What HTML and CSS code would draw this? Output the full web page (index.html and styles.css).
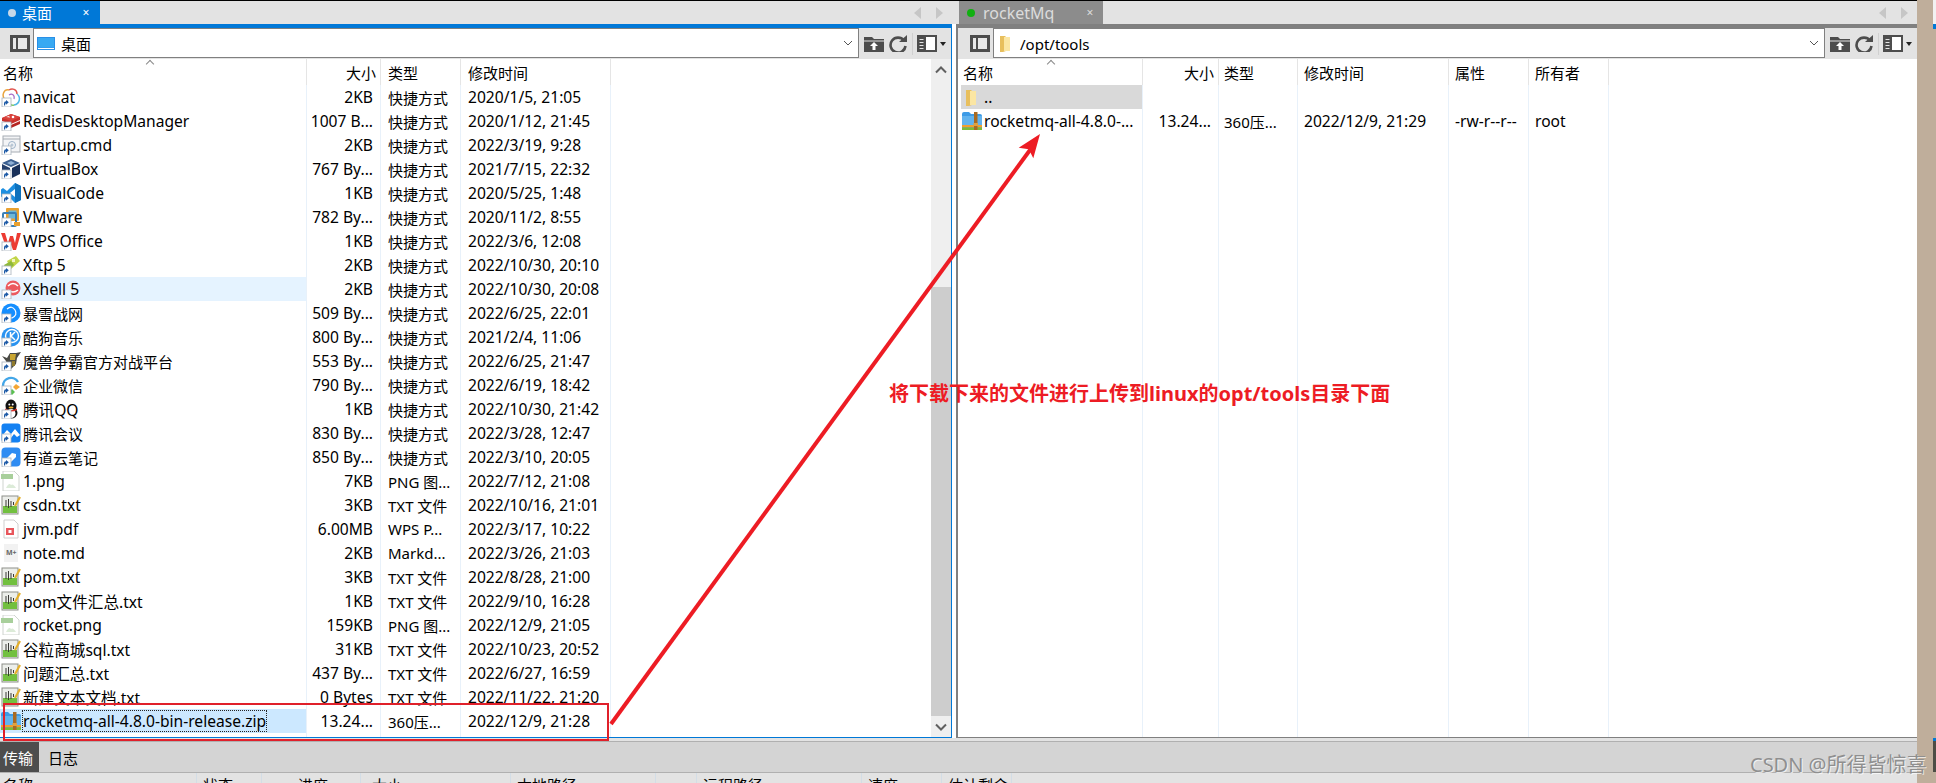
FILE: index.html
```html
<!DOCTYPE html>
<html lang="en">

<head>
    <meta charset="UTF-8">
    <meta name="viewport" content="width=device-width, initial-scale=1.0">
    <title>Xftp</title>
    <link rel="stylesheet" href="styles.css">
</head>

<body>
    <svg class="defs">
        <defs>
            <g id="i-link"><rect x="1" y="11" width="9" height="9" fill="#fff" stroke="#a9b2bc" stroke-width=".8"/><path d="M3 18.5v-2.2q0-2 2-2v-1.4l2.8 2.4-2.8 2.4v-1.4q-.9 0-.9 2.2z" fill="#1d5aa6"/></g>
            <g id="i-navicat"><path d="M4 13C0 8 3 2 8 3" fill="none" stroke="#e8a33c" stroke-width="1.5"/><path d="M8 3c3-2 8-1 8 4" fill="none" stroke="#e2544f" stroke-width="1.5"/><path d="M16 7c4 3 3 10-3 11" fill="none" stroke="#4fb7e6" stroke-width="1.5"/><path d="M13 18c-2 1-3 0-4-1" fill="none" stroke="#7fc96a" stroke-width="1.5"/><path d="M8 8c3-2 6 0 5 4" fill="none" stroke="#a86fc9" stroke-width="1.2"/></g>
            <g id="i-redis"><path d="M1 7l9-4 9 3v3l-9 4-9-3z" fill="#c9302c"/><path d="M1 11l9 3 9-4v3l-9 4-9-3z" fill="#b52522"/><path d="M1 7l9 3 9-4-9-3z" fill="#d9423c"/><circle cx="12" cy="6" r="1.3" fill="#fff"/><path d="M5 6l3-1 1 1.400z" fill="#fff"/></g>
            <g id="i-cmd"><rect x="2" y="1" width="17" height="16" fill="#f3f4f6" stroke="#a6acb3"/><path d="M2 4h17" stroke="#a6acb3"/><circle cx="11" cy="10" r="3.500" fill="none" stroke="#9db3c9"/><circle cx="11" cy="10" r="1.500" fill="#b9c8d7"/></g>
            <g id="i-vbox"><path d="M10 0l9 4-9 4-9-4z" fill="#3b5f8f"/><path d="M1 5l8 4v10l-8-4z" fill="#25406c"/><path d="M19 5l-8 4v10l8-4z" fill="#183059"/><path d="M10 2l4 2-4 2-4-2z" fill="#8fb0d6"/></g>
            <g id="i-vscode"><path d="M14 0l6 3v14l-6 3-8-8-4 3-2-1.500V6.500L2 5l4 3z" fill="#1d8fe1"/><path d="M14 6l-5 4 5 4z" fill="#fff"/><path d="M14 0l6 3v14l-6 3z" fill="#0f72bd"/></g>
            <g id="i-vmware"><rect x="5" y="1" width="13" height="13" rx="1" fill="#e9a12f"/><rect x="7.500" y="3.500" width="8" height="8" fill="#6bb7d8"/><rect x="2" y="6" width="13" height="13" rx="1" fill="none" stroke="#3a7fb5" stroke-width="2"/><path d="M13 15h6v4h-6z" fill="#e9a12f"/></g>
            <g id="i-wps"><path d="M0 2h4l3 10 2-7h3l2 7 2-10h4l-5 17h-3l-3-8-2 8H6z" fill="#ec3b32"/></g>
            <g id="i-xftp"><path d="M6 6l9-5 4 5-9 8z" fill="#c2d548"/><path d="M3 10l7-4 3 4-7 6z" fill="#8fb93a"/><rect x="11" y="4" width="3" height="3" fill="#f1f4c4"/></g>
            <g id="i-xshell"><circle cx="12" cy="9" r="7.500" fill="#ec5a5f"/><path d="M7 7q5-5 10 0M7 11q5 4 10 0" fill="none" stroke="#fff" stroke-width="1.600"/></g>
            <g id="i-battle"><circle cx="10" cy="10" r="9.500" fill="#148eff"/><path d="M6 6q5-4 8 1t-3 8q-4 0-6-4" fill="none" stroke="#fff" stroke-width="1.200"/></g>
            <g id="i-kugou"><rect x=".5" y=".5" width="19" height="19" rx="9" fill="#2a93f0"/><circle cx="11" cy="9" r="6.500" fill="none" stroke="#fff" stroke-width="1.400"/><path d="M9.500 5v8M14 5l-4 4 4 4" fill="none" stroke="#fff" stroke-width="1.500"/></g>
            <g id="i-war"><path d="M1 5l5 2 3-5h6l5-1-4 6-1 6-5 5-4-5-1-3z" fill="#4a4a45"/><path d="M9 3h6l-1 6H9z" fill="#c9a531"/><path d="M11 10h3v5h-3z" fill="#8f7a2c"/></g>
            <g id="i-wecom"><path d="M2 11a8 8 0 0 1 15-4" fill="none" stroke="#43a6e8" stroke-width="2.400"/><path d="M15 9l4 3-4 3-3-3z" fill="#f4a634"/><path d="M11 14l3 3-3 3-3-3z" fill="#5ac04f"/></g>
            <g id="i-qq"><ellipse cx="10" cy="7" rx="5.500" ry="6.500" fill="#111"/><ellipse cx="10" cy="14" rx="6.500" ry="5.500" fill="#111"/><ellipse cx="10" cy="14.500" rx="4.500" ry="4.500" fill="#fff"/><path d="M4 9.500q6 3 12 0v1.500q-6 3-12 0z" fill="#d9302a"/><ellipse cx="10" cy="8.500" rx="2.500" ry="1" fill="#f1b82d"/><circle cx="8.300" cy="5.500" r="1" fill="#fff"/><circle cx="11.700" cy="5.500" r="1" fill="#fff"/></g>
            <g id="i-meet"><rect x=".5" y=".5" width="19" height="19" rx="3" fill="#1481f2"/><path d="M1 13l5-6 4 4 4-5 5 6-3 2-3-3-3 4-3-3-4 3z" fill="#fff"/></g>
            <g id="i-note"><rect x=".5" y=".5" width="19" height="19" rx="4" fill="#2f8cf2"/><path d="M5 12l6-6 4 1v3l-5 5z" fill="#fff"/></g>
            <g id="i-png"><path d="M2 0h11l5 5v15H2z" fill="#fff" stroke="#cfd4cf"/><path d="M0 3h12v5H0z" fill="#a8cf9b"/><path d="M5 17q3-6 5-3 2-2 5 3z" fill="#dcebd8"/></g>
            <g id="i-txt"><rect x="1" y="1" width="16" height="18" fill="#eceeea" stroke="#8d9089"/><rect x="2" y="11" width="14" height="7" fill="#72c03f"/><path d="M5 5v7M7.500 4v9M10 6v6M12.500 7v3" stroke="#3a3a36" stroke-width="1"/><path d="M14 11l5-9" stroke="#e5b02b" stroke-width="2.200"/></g>
            <g id="i-pdf"><path d="M3 1h10l4 4v14H3z" fill="#fff" stroke="#cfcfcf"/><rect x="5" y="9" width="8" height="7" fill="#e8565c"/><rect x="7.500" y="11" width="3" height="3" fill="#fff"/></g>
            <g id="i-md"><path d="M3 1h14v18H3z" fill="#f2f2f2"/><text x="5" y="12" class="mdMark">M+</text></g>
            <g id="i-zip"><path d="M0 3q0-2 2-2h5l2 2h9q2 0 2 2v13H0z" fill="#3d9be6"/><path d="M0 5h20v9H0z" fill="#62b3ee"/><rect y="14" width="20" height="2.500" fill="#f0a030"/><rect y="16.500" width="20" height="2.500" fill="#7cbb3a"/><rect x="12" y="1" width="3.500" height="18" fill="#a86a22"/><rect x="11.500" y="12" width="4.500" height="3" fill="#e0a040"/></g>
            <g id="i-folder"><path d="M1 2h5l1 1v14l-3 1H1z" fill="#e8bf5d"/><path d="M5 3h6v14H5z" fill="#fbe6a3"/></g>
            <g id="i-panel"><rect x="1.500" y="1.500" width="17" height="14" fill="#e8e8e8" stroke="#4d4d4d" stroke-width="3"/><rect x="6" y="2" width="2" height="13" fill="#4d4d4d"/></g>
            <g id="i-up"><path d="M0 2h8l2 2h10v13H0z" fill="#4d4d4d"/><path d="M0 6h20" stroke="#e3e3e3"/><path d="M10 7l4 4h-2.500v4h-3v-4H6z" fill="#fff"/></g>
            <g id="i-refresh"><path d="M16 5.500A7.500 7.500 0 1 0 17.500 11" fill="none" stroke="#4d4d4d" stroke-width="2.600"/><path d="M11 7h8V0z" fill="#4d4d4d"/></g>
            <g id="i-layout"><rect width="20" height="17" fill="#4d4d4d"/><rect x="9" y="2" width="9" height="13" fill="#fff"/><path d="M2.500 4.500h4M2.500 7.500h4M2.500 10.500h4M2.500 13.500h4" stroke="#e3e3e3"/></g>
        </defs>
    </svg>

    <div class="app">
        <div class="topLine"></div>
        <div class="panes">
            <section class="pane paneLeft">
                <div class="tabStrip">
                    <div class="tab tabActive"><span class="tabDot"></span><span class="tabName">桌面</span><span class="tabClose">×</span></div>
                    <div class="tabNav"><span class="navPrev"></span><span class="navNext"></span></div>
                </div>
                <div class="paneBar"></div>
                <div class="paneBody">
                    <div class="toolbar">
                        <svg class="tool panelIcon" viewBox="0 0 20 17"><use href="#i-panel"/></svg>
                        <div class="addrBox">
                            <svg class="addrIcon" viewBox="0 0 18 13"><rect width="18" height="13" fill="#2a8fe6"/><rect x="1" y="1" width="16" height="9.500" fill="#38a9f2"/><rect x="1" y="11" width="16" height="1" fill="#fff"/></svg>
                            <span class="addrText">桌面</span>
                            <svg class="addrChevron" viewBox="0 0 10 6"><path d="M1 1l4 4 4-4" fill="none" stroke="#555"/></svg>
                        </div>
                        <svg class="tool" viewBox="0 0 20 17"><use href="#i-up"/></svg>
                        <svg class="tool" viewBox="0 0 20 17"><use href="#i-refresh"/></svg>
                        <span class="toolSep"></span>
                        <svg class="tool" viewBox="0 0 20 17"><use href="#i-layout"/></svg>
                        <span class="caret"></span>
                    </div>
                    <div class="listWrap">
                        <div class="list">
                            <div class="row head">
                                <div class="cell cName">名称<span class="sortMark"></span></div>
                                <div class="cell cSize">大小</div>
                                <div class="cell cType">类型</div>
                                <div class="cell cDate">修改时间</div>
                                <div class="cell cRest"></div>
                            </div>
                            <div class="row"><div class="cell cName"><svg class="ico" viewBox="0 0 20 20"><use href="#i-navicat"/><use href="#i-link"/></svg>navicat</div><div class="cell cSize">2KB</div><div class="cell cType">快捷方式</div><div class="cell cDate">2020/1/5, 21:05</div><div class="cell cRest"></div></div>
                            <div class="row"><div class="cell cName"><svg class="ico" viewBox="0 0 20 20"><use href="#i-redis"/><use href="#i-link"/></svg>RedisDesktopManager</div><div class="cell cSize">1007 B...</div><div class="cell cType">快捷方式</div><div class="cell cDate">2020/1/12, 21:45</div><div class="cell cRest"></div></div>
                            <div class="row"><div class="cell cName"><svg class="ico" viewBox="0 0 20 20"><use href="#i-cmd"/><use href="#i-link"/></svg>startup.cmd</div><div class="cell cSize">2KB</div><div class="cell cType">快捷方式</div><div class="cell cDate">2022/3/19, 9:28</div><div class="cell cRest"></div></div>
                            <div class="row"><div class="cell cName"><svg class="ico" viewBox="0 0 20 20"><use href="#i-vbox"/><use href="#i-link"/></svg>VirtualBox</div><div class="cell cSize">767 By...</div><div class="cell cType">快捷方式</div><div class="cell cDate">2021/7/15, 22:32</div><div class="cell cRest"></div></div>
                            <div class="row"><div class="cell cName"><svg class="ico" viewBox="0 0 20 20"><use href="#i-vscode"/><use href="#i-link"/></svg>VisualCode</div><div class="cell cSize">1KB</div><div class="cell cType">快捷方式</div><div class="cell cDate">2020/5/25, 1:48</div><div class="cell cRest"></div></div>
                            <div class="row"><div class="cell cName"><svg class="ico" viewBox="0 0 20 20"><use href="#i-vmware"/><use href="#i-link"/></svg>VMware</div><div class="cell cSize">782 By...</div><div class="cell cType">快捷方式</div><div class="cell cDate">2020/11/2, 8:55</div><div class="cell cRest"></div></div>
                            <div class="row"><div class="cell cName"><svg class="ico" viewBox="0 0 20 20"><use href="#i-wps"/><use href="#i-link"/></svg>WPS Office</div><div class="cell cSize">1KB</div><div class="cell cType">快捷方式</div><div class="cell cDate">2022/3/6, 12:08</div><div class="cell cRest"></div></div>
                            <div class="row"><div class="cell cName"><svg class="ico" viewBox="0 0 20 20"><use href="#i-xftp"/><use href="#i-link"/></svg>Xftp 5</div><div class="cell cSize">2KB</div><div class="cell cType">快捷方式</div><div class="cell cDate">2022/10/30, 20:10</div><div class="cell cRest"></div></div>
                            <div class="row"><div class="cell cName hover"><svg class="ico" viewBox="0 0 20 20"><use href="#i-xshell"/><use href="#i-link"/></svg>Xshell 5</div><div class="cell cSize">2KB</div><div class="cell cType">快捷方式</div><div class="cell cDate">2022/10/30, 20:08</div><div class="cell cRest"></div></div>
                            <div class="row"><div class="cell cName cjk"><svg class="ico" viewBox="0 0 20 20"><use href="#i-battle"/><use href="#i-link"/></svg>暴雪战网</div><div class="cell cSize">509 By...</div><div class="cell cType">快捷方式</div><div class="cell cDate">2022/6/25, 22:01</div><div class="cell cRest"></div></div>
                            <div class="row"><div class="cell cName cjk"><svg class="ico" viewBox="0 0 20 20"><use href="#i-kugou"/><use href="#i-link"/></svg>酷狗音乐</div><div class="cell cSize">800 By...</div><div class="cell cType">快捷方式</div><div class="cell cDate">2021/2/4, 11:06</div><div class="cell cRest"></div></div>
                            <div class="row"><div class="cell cName cjk"><svg class="ico" viewBox="0 0 20 20"><use href="#i-war"/><use href="#i-link"/></svg>魔兽争霸官方对战平台</div><div class="cell cSize">553 By...</div><div class="cell cType">快捷方式</div><div class="cell cDate">2022/6/25, 21:47</div><div class="cell cRest"></div></div>
                            <div class="row"><div class="cell cName cjk"><svg class="ico" viewBox="0 0 20 20"><use href="#i-wecom"/><use href="#i-link"/></svg>企业微信</div><div class="cell cSize">790 By...</div><div class="cell cType">快捷方式</div><div class="cell cDate">2022/6/19, 18:42</div><div class="cell cRest"></div></div>
                            <div class="row"><div class="cell cName"><svg class="ico" viewBox="0 0 20 20"><use href="#i-qq"/><use href="#i-link"/></svg>腾讯QQ</div><div class="cell cSize">1KB</div><div class="cell cType">快捷方式</div><div class="cell cDate">2022/10/30, 21:42</div><div class="cell cRest"></div></div>
                            <div class="row"><div class="cell cName cjk"><svg class="ico" viewBox="0 0 20 20"><use href="#i-meet"/><use href="#i-link"/></svg>腾讯会议</div><div class="cell cSize">830 By...</div><div class="cell cType">快捷方式</div><div class="cell cDate">2022/3/28, 12:47</div><div class="cell cRest"></div></div>
                            <div class="row"><div class="cell cName cjk"><svg class="ico" viewBox="0 0 20 20"><use href="#i-note"/><use href="#i-link"/></svg>有道云笔记</div><div class="cell cSize">850 By...</div><div class="cell cType">快捷方式</div><div class="cell cDate">2022/3/10, 20:05</div><div class="cell cRest"></div></div>
                            <div class="row"><div class="cell cName"><svg class="ico" viewBox="0 0 20 20"><use href="#i-png"/></svg>1.png</div><div class="cell cSize">7KB</div><div class="cell cType">PNG 图...</div><div class="cell cDate">2022/7/12, 21:08</div><div class="cell cRest"></div></div>
                            <div class="row"><div class="cell cName"><svg class="ico" viewBox="0 0 20 20"><use href="#i-txt"/></svg>csdn.txt</div><div class="cell cSize">3KB</div><div class="cell cType">TXT 文件</div><div class="cell cDate">2022/10/16, 21:01</div><div class="cell cRest"></div></div>
                            <div class="row"><div class="cell cName"><svg class="ico" viewBox="0 0 20 20"><use href="#i-pdf"/></svg>jvm.pdf</div><div class="cell cSize">6.00MB</div><div class="cell cType">WPS P...</div><div class="cell cDate">2022/3/17, 10:22</div><div class="cell cRest"></div></div>
                            <div class="row"><div class="cell cName"><svg class="ico" viewBox="0 0 20 20"><use href="#i-md"/></svg>note.md</div><div class="cell cSize">2KB</div><div class="cell cType">Markd...</div><div class="cell cDate">2022/3/26, 21:03</div><div class="cell cRest"></div></div>
                            <div class="row"><div class="cell cName"><svg class="ico" viewBox="0 0 20 20"><use href="#i-txt"/></svg>pom.txt</div><div class="cell cSize">3KB</div><div class="cell cType">TXT 文件</div><div class="cell cDate">2022/8/28, 21:00</div><div class="cell cRest"></div></div>
                            <div class="row"><div class="cell cName"><svg class="ico" viewBox="0 0 20 20"><use href="#i-txt"/></svg>pom文件汇总.txt</div><div class="cell cSize">1KB</div><div class="cell cType">TXT 文件</div><div class="cell cDate">2022/9/10, 16:28</div><div class="cell cRest"></div></div>
                            <div class="row"><div class="cell cName"><svg class="ico" viewBox="0 0 20 20"><use href="#i-png"/></svg>rocket.png</div><div class="cell cSize">159KB</div><div class="cell cType">PNG 图...</div><div class="cell cDate">2022/12/9, 21:05</div><div class="cell cRest"></div></div>
                            <div class="row"><div class="cell cName"><svg class="ico" viewBox="0 0 20 20"><use href="#i-txt"/></svg>谷粒商城sql.txt</div><div class="cell cSize">31KB</div><div class="cell cType">TXT 文件</div><div class="cell cDate">2022/10/23, 20:52</div><div class="cell cRest"></div></div>
                            <div class="row"><div class="cell cName"><svg class="ico" viewBox="0 0 20 20"><use href="#i-txt"/></svg>问题汇总.txt</div><div class="cell cSize">437 By...</div><div class="cell cType">TXT 文件</div><div class="cell cDate">2022/6/27, 16:59</div><div class="cell cRest"></div></div>
                            <div class="row"><div class="cell cName"><svg class="ico" viewBox="0 0 20 20"><use href="#i-txt"/></svg>新建文本文档.txt</div><div class="cell cSize">0 Bytes</div><div class="cell cType">TXT 文件</div><div class="cell cDate">2022/11/22, 21:20</div><div class="cell cRest"></div></div>
                            <div class="row"><div class="cell cName selected"><svg class="ico" viewBox="0 0 20 20"><use href="#i-zip"/></svg><span class="focusText">rocketmq-all-4.8.0-bin-release.zip</span></div><div class="cell cSize">13.24...</div><div class="cell cType">360压...</div><div class="cell cDate">2022/12/9, 21:28</div><div class="cell cRest"></div></div>
                            <div class="row rowFill">
                                <div class="cell cName"></div>
                                <div class="cell cSize"></div>
                                <div class="cell cType"></div>
                                <div class="cell cDate"></div>
                                <div class="cell cRest"></div>
                            </div>
                        </div>
                        <div class="scrollBar">
                            <div class="scrollBtn"><svg viewBox="0 0 12 8"><path d="M1 6.500l5-5 5 5" fill="none" stroke="#606060" stroke-width="2"/></svg></div>
                            <div class="scrollTrack"><div class="scrollThumb"></div></div>
                            <div class="scrollBtn"><svg viewBox="0 0 12 8"><path d="M1 1.500l5 5 5-5" fill="none" stroke="#606060" stroke-width="2"/></svg></div>
                        </div>
                    </div>
                </div>
            </section>

            <div class="paneGap"><div class="paneGapTop"></div></div>

            <section class="pane paneRight">
                <div class="tabStrip">
                    <div class="tab tabRemote"><span class="tabDot"></span><span class="tabName">rocketMq</span><span class="tabClose">×</span></div>
                    <div class="tabNav"><span class="navPrev"></span><span class="navNext"></span></div>
                </div>
                <div class="paneBar"></div>
                <div class="paneBody">
                    <div class="toolbar">
                        <svg class="tool panelIcon" viewBox="0 0 20 17"><use href="#i-panel"/></svg>
                        <div class="addrBox">
                            <svg class="addrFolder" viewBox="0 0 12 18"><use href="#i-folder"/></svg>
                            <span class="addrText">/opt/tools</span>
                            <svg class="addrChevron" viewBox="0 0 10 6"><path d="M1 1l4 4 4-4" fill="none" stroke="#555"/></svg>
                        </div>
                        <svg class="tool" viewBox="0 0 20 17"><use href="#i-up"/></svg>
                        <svg class="tool" viewBox="0 0 20 17"><use href="#i-refresh"/></svg>
                        <span class="toolSep"></span>
                        <svg class="tool" viewBox="0 0 20 17"><use href="#i-layout"/></svg>
                        <span class="caret"></span>
                    </div>
                    <div class="listWrap">
                        <div class="list">
                            <div class="row head">
                                <div class="cell cName">名称<span class="sortMark"></span></div>
                                <div class="cell cSize">大小</div>
                                <div class="cell cType">类型</div>
                                <div class="cell cDate">修改时间</div>
                                <div class="cell cAttr">属性</div>
                                <div class="cell cOwner">所有者</div>
                                <div class="cell cRest"></div>
                            </div>
                            <div class="row"><div class="cell cName parent"><svg class="ico" viewBox="0 0 20 20"><use href="#i-folder" x="3" y="1"/></svg>..</div><div class="cell cSize"></div><div class="cell cType"></div><div class="cell cDate"></div><div class="cell cAttr"></div><div class="cell cOwner"></div><div class="cell cRest"></div></div>
                            <div class="row"><div class="cell cName"><svg class="ico" viewBox="0 0 20 20"><use href="#i-zip"/></svg>rocketmq-all-4.8.0-...</div><div class="cell cSize">13.24...</div><div class="cell cType">360压...</div><div class="cell cDate">2022/12/9, 21:29</div><div class="cell cAttr">-rw-r--r--</div><div class="cell cOwner">root</div><div class="cell cRest"></div></div>
                            <div class="row rowFill">
                                <div class="cell cName"></div>
                                <div class="cell cSize"></div>
                                <div class="cell cType"></div>
                                <div class="cell cDate"></div>
                                <div class="cell cAttr"></div>
                                <div class="cell cOwner"></div>
                                <div class="cell cRest"></div>
                            </div>
                        </div>
                    </div>
                </div>
            </section>
        </div>

        <div class="bottomGap"></div>
        <div class="bottomTabs">
            <div class="bottomTab bottomTabActive">传输</div>
            <div class="bottomTab">日志</div>
        </div>
        <div class="transferHead">
            <div class="tCol tName">名称</div>
            <div class="tCol tState">状态</div>
            <div class="tCol tProg">进度</div>
            <div class="tCol tSize">大小</div>
            <div class="tCol tLocal">本地路径</div>
            <div class="tCol tDir"></div>
            <div class="tCol tRemote">远程路径</div>
            <div class="tCol tSpeed">速度</div>
            <div class="tCol tLeft">估计剩余</div>
        </div>
    </div>

    <div class="edge">
        <div class="edgeSliver">
            <span class="sliverTop"></span>
            <span class="sliverBlue"></span>
            <span class="sliverGap"></span>
            <span class="sliverBlue2"></span>
            <span class="sliverDark"></span>
        </div>
    </div>

    <!-- annotations drawn on top of the screenshot -->
    <div class="redBox"></div>
    <svg class="arrow" viewBox="0 0 1936 783">
        <path d="M611 724L1030 150" stroke="#ed1c24" stroke-width="4" fill="none"/>
        <path d="M1040 134L1033.300 158.300 1028.800 149.300 1018.700 147.700z" fill="#ed1c24"/>
    </svg>
    <div class="noteText">将下载下来的文件进行上传到linux的opt/tools目录下面</div>
    <div class="watermark">CSDN @所得皆惊喜</div>
</body>

</html>
```

FILE: styles.css
```css
* {
    margin: 0px;
    padding: 0px;
    box-sizing: border-box;
}

html,
body {
    width: 1936px;
    height: 783px;
    overflow: hidden;
}

body {
    display: flex;
    position: relative;
    background-color: white;
    color: black;
    font-family: "Noto Sans", "Noto Sans CJK SC", sans-serif;
    font-size: 15.6px;
}

.defs {
    display: none;
}

.mdMark {
    font-size: 7px;
    font-weight: bold;
    fill: #666;
}

.app {
    width: 1917px;
    height: 783px;
    display: flex;
    flex-direction: column;
    overflow: hidden;
}

.topLine {
    height: 1px;
    background-color: black;
    flex-shrink: 0;
}

.panes {
    height: 737px;
    display: flex;
    flex-shrink: 0;
}

.pane {
    display: flex;
    flex-direction: column;
}

.paneLeft {
    width: 952px;
}

.paneRight {
    flex: 1;
    min-width: 0;
}

.paneGap {
    width: 4px;
    background-color: white;
}

.paneGapTop {
    height: 23px;
    background-color: #e3e3e3;
}

/* tabs */
.tabStrip {
    height: 23px;
    background-color: #e3e3e3;
    display: flex;
    justify-content: space-between;
    flex-shrink: 0;
}

.tab {
    display: flex;
    align-items: center;
    font-size: 15px;
}

.tabActive {
    width: 100px;
    padding-left: 8px;
    background-color: #0078d7;
    color: white;
}

.tabRemote {
    width: 144px;
    margin-left: 3px;
    padding-left: 8px;
    background-color: #8c8c8c;
    color: #dcdcdc;
    font-size: 16px;
}

.tabDot {
    width: 8px;
    height: 8px;
    border-radius: 50%;
    background-color: #c5d8e8;
    flex-shrink: 0;
}

.tabRemote .tabDot {
    background-color: #10b010;
}

.tabName {
    margin-left: 6px;
    flex: 1;
}

.tabRemote .tabName {
    margin-left: 8px;
}

.tabClose {
    width: 14px;
    margin-right: 7px;
    text-align: center;
    font-size: 12px;
}

.tabRemote .tabClose {
    margin-right: 6px;
}

.tabNav {
    display: flex;
    align-items: center;
    gap: 15px;
    padding-right: 9px;
}

.navPrev,
.navNext {
    width: 0px;
    height: 0px;
    border-top: 6px solid transparent;
    border-bottom: 6px solid transparent;
}

.navPrev {
    border-right: 7px solid #c6c6c6;
}

.navNext {
    border-left: 7px solid #c6c6c6;
}

.paneBar {
    height: 4px;
    background-color: #808080;
    flex-shrink: 0;
}

.paneLeft .paneBar {
    background-color: #0078d7;
}

.paneBody {
    flex: 1;
    min-height: 0;
    display: flex;
    flex-direction: column;
    border-left: 2px solid #808080;
    border-bottom: 1px solid #808080;
}

.paneLeft .paneBody {
    border-left: 0px;
    border-right: 1px solid #0078d7;
    border-bottom: 1px solid #0078d7;
}

/* toolbar */
.toolbar {
    height: 31px;
    background-color: #e3e3e3;
    display: flex;
    align-items: center;
    gap: 4px;
    padding-right: 5px;
    padding-left: 10px;
    flex-shrink: 0;
}

.paneRight .toolbar {
    padding-left: 12px;
}

.tool {
    width: 20px;
    height: 17px;
    flex-shrink: 0;
}

.panelIcon {
    margin-right: -1px;
}

.toolSep {
    width: 1px;
    height: 22px;
    background-color: #d0d0d0;
}

.caret {
    width: 0px;
    height: 0px;
    margin-left: -1px;
    border-top: 4px solid #222;
    border-left: 3.5px solid transparent;
    border-right: 3.5px solid transparent;
}

.addrBox {
    flex: 1;
    height: 30px;
    margin-bottom: 1px;
    margin-right: 1px;
    border: 1px solid #808080;
    background-color: white;
    display: flex;
    align-items: center;
    padding-left: 3px;
    padding-right: 5px;
    font-size: 15px;
}

.addrIcon {
    width: 18px;
    height: 13px;
}

.addrFolder {
    width: 12px;
    height: 18px;
    margin-left: 2px;
}

.addrText {
    margin-left: 6px;
    flex: 1;
    padding-top: 1px;
}

.paneRight .addrText {
    margin-left: 9px;
}

.addrChevron {
    width: 10px;
    height: 6px;
}

/* file list */
.listWrap {
    flex: 1;
    min-height: 0;
    display: flex;
}

.list {
    flex: 1;
    min-width: 0;
    display: flex;
    flex-direction: column;
    background-color: white;
}

.paneRight .list {
    padding-left: 3px;
}

.row {
    height: 24px;
    display: flex;
    flex-shrink: 0;
}

.head {
    height: 26px;
    font-size: 15px;
}

.rowFill {
    flex: 1;
    height: auto;
}

.cell {
    height: 100%;
    border-right: 1px solid #e8f1fa;
    display: flex;
    align-items: center;
    white-space: nowrap;
    overflow: hidden;
    padding-left: 7px;
    flex-shrink: 0;
}

.head .cell {
    border-right-color: #e5e5e5;
    position: relative;
    padding-top: 1px;
}

.cName {
    width: 307px;
    padding-left: 1px;
    margin-right: 0px;
}

.cjk {
    font-size: 15px;
}

.cSize {
    width: 74px;
    justify-content: flex-end;
    padding-right: 7px;
    padding-left: 0px;
}

.head .cSize {
    padding-right: 4px;
}

.cType {
    width: 80px;
    font-size: 15px;
}

.cDate {
    width: 150px;
}

.cAttr,
.cOwner {
    width: 80px;
}

.cRest {
    flex: 1;
    border-right: 0px;
}

.paneRight .cName {
    width: 182px;
}

.paneRight .cSize {
    width: 76px;
}

.paneRight .cType {
    width: 79px;
    padding-left: 5px;
}

.paneRight .cDate {
    width: 151px;
    padding-left: 6px;
}

.paneRight .cAttr,
.paneRight .cOwner {
    padding-left: 6px;
}

.head .cName {
    padding-left: 3px;
}

.paneRight .head .cName {
    padding-left: 2px;
}

.sortMark {
    position: absolute;
    left: 147px;
    top: 2px;
    width: 6px;
    height: 6px;
    border-left: 1px solid #8a8a8a;
    border-top: 1px solid #8a8a8a;
    transform: rotate(45deg);
}

.paneRight .sortMark {
    left: 87px;
}

.ico {
    width: 20px;
    height: 20px;
    margin-right: 2px;
    flex-shrink: 0;
}

.hover {
    background-color: #e5f3ff;
}

.selected {
    background-color: #cce8ff;
}

.parent {
    background-color: #d9d9d9;
}

.focusText {
    outline: 1px dotted #222;
    line-height: 20px;
}

/* scroll bar */
.scrollBar {
    width: 20px;
    background-color: #efefef;
    display: flex;
    flex-direction: column;
    flex-shrink: 0;
}

.scrollBtn {
    height: 21px;
    display: flex;
    align-items: center;
    justify-content: center;
}

.scrollBtn svg {
    width: 12px;
    height: 8px;
}

.scrollTrack {
    flex: 1;
    display: flex;
    flex-direction: column;
    justify-content: flex-end;
}

.scrollThumb {
    height: 429px;
    background-color: #cdcdcd;
}

/* bottom panel */
.bottomGap {
    height: 4px;
    background-color: #e3e3e3;
    border-bottom: 1px solid #b0b0b0;
    flex-shrink: 0;
}

.bottomTabs {
    height: 31px;
    background-color: #d4d4d4;
    border-bottom: 1px solid #b0b0b0;
    display: flex;
    flex-shrink: 0;
}

.bottomTab {
    display: flex;
    align-items: center;
    padding-left: 9px;
    font-size: 15px;
}

.bottomTabActive {
    width: 39px;
    padding-left: 3px;
    background-color: #4d4d4d;
    color: white;
}

.transferHead {
    height: 24px;
    flex-shrink: 0;
    background-color: #e3e3e3;
    display: flex;
    font-size: 15px;
}

.tCol {
    height: 24px;
    line-height: 24px;
    white-space: nowrap;
    overflow: hidden;
    border-right: 1px solid #d3dde6;
    padding-left: 6px;
    flex-shrink: 0;
}

.tName {
    width: 197px;
    padding-left: 3px;
}

.tState {
    width: 65px;
}

.tProg {
    width: 99px;
    padding-left: 36px;
}

.tSize {
    width: 150px;
    padding-left: 11px;
}

.tLocal {
    width: 145px;
}

.tDir {
    width: 41px;
}

.tRemote {
    width: 165px;
}

.tSpeed {
    width: 80px;
}

.tLeft {
    width: 70px;
}

/* window behind the screenshot */
.edge {
    flex: 1;
    background-color: #bfae9b;
    display: flex;
    justify-content: flex-end;
}

.edgeSliver {
    width: 3px;
    display: flex;
    flex-direction: column;
}

.sliverTop {
    height: 24px;
    background-color: #f2f2f2;
}

.sliverBlue {
    height: 5px;
    background-color: #0078d7;
}

.sliverGap {
    height: 709px;
}

.sliverBlue2 {
    height: 3px;
    background-color: #0078d7;
}

.sliverDark {
    height: 31px;
    background-color: #4d4d45;
}

/* annotations */
.redBox {
    position: absolute;
    left: 3px;
    top: 703px;
    width: 606px;
    height: 38px;
    border: 2px solid #e0202a;
}

.arrow {
    position: absolute;
    left: 0px;
    top: 0px;
    width: 1936px;
    height: 783px;
}

.noteText {
    position: absolute;
    left: 889px;
    top: 381px;
    color: #ed1c24;
    font-size: 20px;
    font-weight: bold;
    white-space: nowrap;
    line-height: 26px;
}

.watermark {
    position: absolute;
    left: 1750px;
    top: 752px;
    color: #8f8f8f;
    font-size: 20px;
    line-height: 26px;
    white-space: nowrap;
    text-shadow: 1px 1px 0px rgba(255, 255, 255, .7);
}
```
